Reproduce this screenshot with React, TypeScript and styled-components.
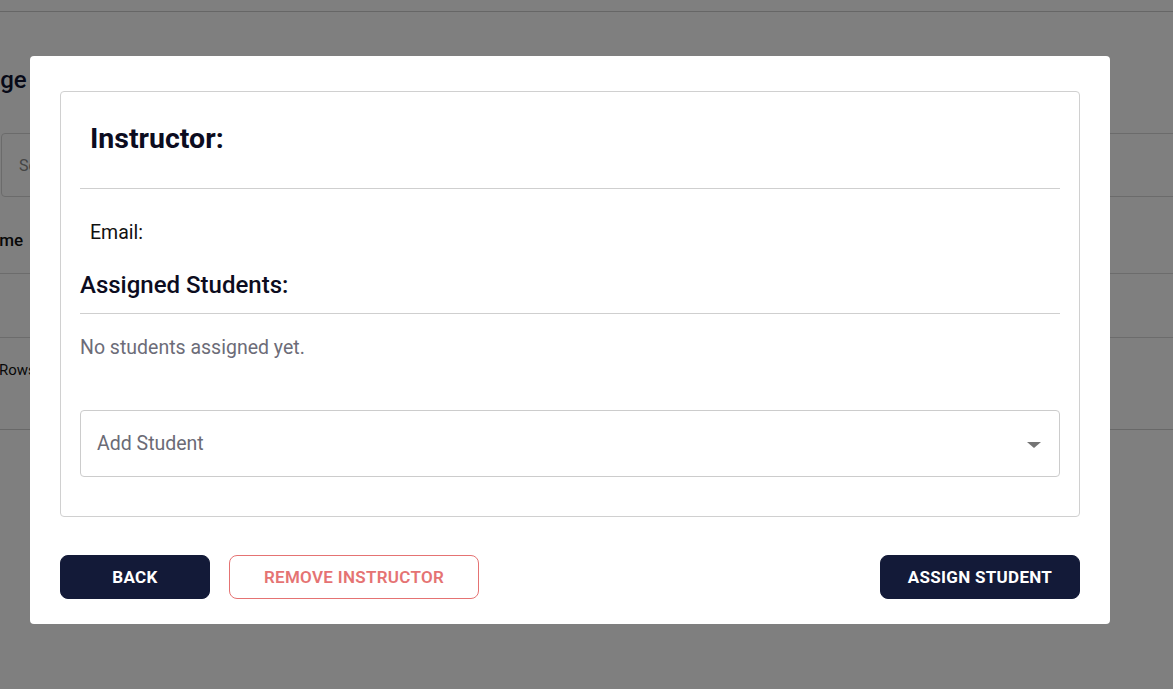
import React from "react";
import styled, { createGlobalStyle } from "styled-components";

const GlobalStyle = createGlobalStyle`
  html, body {
    margin: 0;
    padding: 0;
    background: #ffffff;
    font-family: Roboto, "Noto Sans", Arial, sans-serif;
    overflow: hidden;
  }
  * { box-sizing: border-box; }
`;

/* ---------- underlying page ---------- */
const Page = styled.div`
  width: 1173px;
  height: 689px;
  background: #ffffff;
  display: flex;
  flex-direction: column;
  overflow: hidden;
`;

const TopBar = styled.div`
  height: 12px;
  border-bottom: 1px solid #cccccc;
  flex-shrink: 0;
`;

const PageTitle = styled.h1`
  margin: 54px 0 0 -60px;
  font-size: 24px;
  font-weight: 500;
  color: #0e1330;
  line-height: 28px;
  white-space: nowrap;
`;

const SearchBox = styled.div`
  margin: 39px -20px 0 1px;
  height: 64px;
  border: 1px solid #d6d6d6;
  border-radius: 4px;
  display: flex;
  align-items: center;
  padding-left: 17px;
  font-size: 16px;
  color: #8a8a8a;
  white-space: nowrap;
`;

const TableHead = styled.div`
  height: 77px;
  border-bottom: 1px solid #d8d8d8;
  display: flex;
  align-items: center;
  padding-top: 10px;
  margin-left: -22px;
  font-size: 17px;
  font-weight: 500;
  color: #111;
`;

const TableRow = styled.div`
  height: 64px;
  border-bottom: 1px solid #d8d8d8;
`;

const Pagination = styled.div`
  height: 92px;
  border-bottom: 1px solid #d0d0d0;
  display: flex;
  align-items: flex-start;
  padding-top: 23px;
  margin-left: -1px;
  font-size: 15px;
  color: #111;
  white-space: nowrap;
`;

/* ---------- modal ---------- */
const Overlay = styled.div`
  position: fixed;
  inset: 0;
  background: rgba(0, 0, 0, 0.5);
  display: flex;
  align-items: flex-start;
  padding: 56px 0 0 30px;
`;

const Modal = styled.div`
  width: 1080px;
  height: 568px;
  background: #ffffff;
  border-radius: 4px;
  padding: 35px 30px 25px 30px;
  display: flex;
  flex-direction: column;
  justify-content: space-between;
`;

const Card = styled.div`
  border: 1px solid #d0d0d0;
  border-radius: 4px;
  padding: 19px;
  display: flex;
  flex-direction: column;
`;

const InstructorTitle = styled.h2`
  margin: 11px 0 0 10px;
  font-size: 28.5px;
  font-weight: 700;
  line-height: 34px;
  color: #0c0c20;
`;

const Divider = styled.hr<{ $top: number }>`
  border: none;
  border-top: 1px solid #cfcfcf;
  margin: ${(p) => p.$top}px 0 0 0;
  height: 0;
`;

const EmailLine = styled.p`
  margin: 32px 0 0 10px;
  font-size: 19.5px;
  line-height: 23px;
  color: #111111;
`;

const SectionTitle = styled.h3`
  margin: 27px 0 0 0;
  font-size: 24px;
  font-weight: 500;
  line-height: 28px;
  color: #0c0c20;
`;

const EmptyText = styled.p`
  margin: 22px 0 0 0;
  font-size: 19.5px;
  line-height: 23px;
  color: #6c6c78;
`;

const SelectBox = styled.div`
  margin: 51px 0 20px 0;
  height: 67px;
  border: 1px solid #cccccc;
  border-radius: 4px;
  display: flex;
  align-items: center;
  justify-content: space-between;
  padding: 0 18px 0 16px;
  font-size: 19.5px;
  color: #6b6b76;
`;

const Arrow = styled.span`
  width: 0;
  height: 0;
  border-left: 7px solid transparent;
  border-right: 7px solid transparent;
  border-top: 6px solid #757575;
  margin-top: 2px;
`;

const Footer = styled.div`
  display: flex;
  align-items: center;
`;

const Button = styled.button<{ $variant: "primary" | "danger"; $width: number }>`
  width: ${(p) => p.$width}px;
  height: 44px;
  border-radius: 8px;
  font-family: Roboto, Arial, sans-serif;
  font-size: 17px;
  letter-spacing: 0.3px;
  text-transform: uppercase;
  cursor: pointer;
  padding: 0 0 1px 0;
  background: ${(p) => (p.$variant === "primary" ? "#131a38" : "#ffffff")};
  color: ${(p) => (p.$variant === "primary" ? "#ffffff" : "#e57373")};
  border: 1px solid ${(p) => (p.$variant === "primary" ? "#131a38" : "#e57373")};
  font-weight: ${(p) => (p.$variant === "primary" ? 700 : 600)};
`;

const Spacer = styled.div`
  flex: 1;
`;

const Gap = styled.div`
  width: 19px;
`;

export default function App() {
  return (
    <>
      <GlobalStyle />
      <Page>
        <TopBar />
        <PageTitle>Manage Instructors</PageTitle>
        <SearchBox>Search instructors</SearchBox>
        <TableHead>Name</TableHead>
        <TableRow />
        <Pagination>Rows per page:</Pagination>
      </Page>
      <Overlay>
        <Modal>
          <Card>
            <InstructorTitle>Instructor:</InstructorTitle>
            <Divider $top={32} />
            <EmailLine>Email:</EmailLine>
            <SectionTitle>Assigned Students:</SectionTitle>
            <Divider $top={14} />
            <EmptyText>No students assigned yet.</EmptyText>
            <SelectBox>
              <span>Add Student</span>
              <Arrow />
            </SelectBox>
          </Card>
          <Footer>
            <Button $variant="primary" $width={150}>Back</Button>
            <Gap />
            <Button $variant="danger" $width={250}>Remove Instructor</Button>
            <Spacer />
            <Button $variant="primary" $width={200}>Assign Student</Button>
          </Footer>
        </Modal>
      </Overlay>
    </>
  );
}
